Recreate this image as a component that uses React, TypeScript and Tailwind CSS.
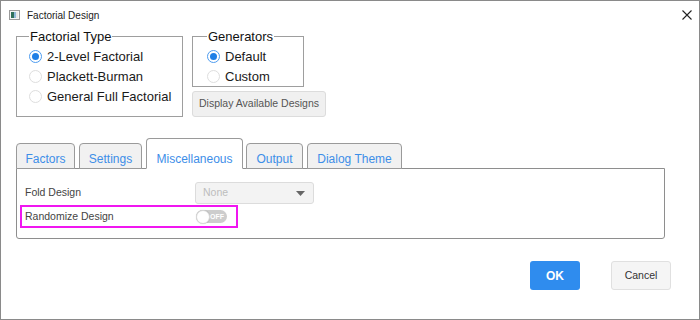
import { useState } from 'react';

const FONT = "font-['Liberation_Sans',Arial,sans-serif]";

function Radio({ checked, label }: { checked: boolean; label: string }) {
  return (
    <div className="flex h-[20px] items-center gap-[5px]">
      {checked ? (
        <span className="flex h-[13px] w-[13px] items-center justify-center rounded-full border-[1.5px] border-[#4d9cf0] bg-white">
          <span className="h-[7px] w-[7px] rounded-full bg-[#1f7fe6]" />
        </span>
      ) : (
        <span className="h-[13px] w-[13px] rounded-full border border-[#dedede] bg-white" />
      )}
      <span className="text-[13px] leading-none text-[#1a1a1a]">{label}</span>
    </div>
  );
}

const tabs = [
  { name: 'Factors', w: 'w-[59px]' },
  { name: 'Settings', w: 'w-[63px]' },
  { name: 'Miscellaneous', w: 'w-[97px]' },
  { name: 'Output', w: 'w-[57px]' },
  { name: 'Dialog Theme', w: 'w-[95px]' },
];

export default function App() {
  const [active] = useState('Miscellaneous');

  return (
    <div className={`flex h-[320px] w-[700px] flex-col border border-[#8a8a8a] bg-white ${FONT}`}>
      {/* Title bar */}
      <div className="flex h-[28px] items-center justify-between pl-[8px] pr-[7px]">
        <div className="flex items-center gap-[7px]">
          <svg width="11" height="10" viewBox="0 0 11 10">
            <rect x="0.5" y="0.5" width="10" height="9" fill="#f4f4f4" stroke="#9a9a9a" />
            <rect x="2" y="2" width="3" height="6" fill="#2f6f5a" />
            <rect x="5" y="2" width="2" height="6" fill="#8fb8d8" />
            <rect x="7" y="2" width="2" height="6" fill="#e6e6e6" />
          </svg>
          <span className="text-[10px] text-[#222]">Factorial Design</span>
        </div>
        <svg width="10" height="10" viewBox="0 0 10 10" className="mt-[-1px]">
          <path d="M0.5 0.5 L9.5 9.5 M9.5 0.5 L0.5 9.5" stroke="#222" strokeWidth="1.1" />
        </svg>
      </div>

      {/* Option groups */}
      <div className="flex items-start gap-[9px] pl-[15px]">
        <fieldset className="h-[88px] w-[167px] border border-[#9e9e9e] pb-[10px] pl-[12px]">
          <legend className="px-[1px] text-[13px] leading-[15px] text-[#111]">Factorial Type</legend>
          <div className="mt-[2px]">
            <Radio checked label="2-Level Factorial" />
            <Radio checked={false} label="Plackett-Burman" />
            <Radio checked={false} label="General Full Factorial" />
          </div>
        </fieldset>

        <div className="flex flex-col">
          <fieldset className="h-[58px] w-[112px] border border-[#9e9e9e] pl-[14px]">
            <legend className="px-[1px] text-[13px] leading-[15px] text-[#111]">Generators</legend>
            <div className="mt-[2px]">
              <Radio checked label="Default" />
              <Radio checked={false} label="Custom" />
            </div>
          </fieldset>
          <button className="mt-[4px] h-[26px] w-[134px] rounded-[3px] border border-[#dcdcdc] bg-[#f0f0f0] text-[10.5px] text-[#555]">
            Display Available Designs
          </button>
        </div>
      </div>

      {/* Tabs */}
      <div className="relative z-10 mb-[-1px] ml-[15px] mt-[21px] flex items-end">
        {tabs.map((t, i) => {
          const sel = t.name === active;
          const gap = i === 0 ? '' : i === 3 ? 'ml-[3px]' : 'ml-[4px]';
          return (
            <div
              key={t.name}
              className={`${t.w} ${gap} flex justify-center rounded-t-[4px] border border-[#9a9a9a] text-[12px] text-[#3d8ee8] ${
                sel
                  ? 'h-[31px] border-b-white bg-white pt-[11px]'
                  : 'h-[26px] bg-[#f1f1f1] pt-[6px]'
              }`}
            >
              {t.name}
            </div>
          );
        })}
      </div>

      {/* Tab panel */}
      <div className="ml-[15px] h-[71px] w-[649px] rounded-b-[3px] border border-[#8e8e8e] bg-white pt-[13px]">
        <div className="flex items-start">
          <span className="ml-[8px] mt-[3px] w-[170px] text-[10.5px] text-[#444]">Fold Design</span>
          <div className="flex h-[22px] w-[119px] items-center justify-between rounded-[3px] border border-[#dcdcdc] bg-[#f3f3f3] pl-[7px] pr-[8px]">
            <span className="text-[10.5px] text-[#bdbdbd]">None</span>
            <svg width="9" height="5" viewBox="0 0 9 5">
              <path d="M0 0 H9 L4.5 5 Z" fill="#666" />
            </svg>
          </div>
        </div>
        <div className="ml-[3px] mt-[1px] flex h-[23px] w-[218px] items-center border-2 border-[#f016f0] pl-[3px]">
          <span className="w-[171px] text-[10.5px] text-[#444]">Randomize Design</span>
          <div className="relative flex h-[13px] w-[31px] items-center justify-end rounded-full bg-[#cdcdcd] pr-[3px]">
            <span className="absolute left-0 top-[-0.5px] h-[14px] w-[14px] rounded-full border border-[#d8d8d8] bg-white shadow-[0_0_1px_rgba(0,0,0,0.2)]" />
            <span className="text-[7px] font-bold leading-none text-white">OFF</span>
          </div>
        </div>
      </div>

      {/* Footer buttons */}
      <div className="mt-[22px] flex justify-end gap-[31px] pr-[28px]">
        <button className="h-[29px] w-[50px] rounded-[3px] bg-[#2f8cee] text-[12px] font-bold text-white">
          OK
        </button>
        <button className="h-[29px] w-[60px] rounded-[3px] border border-[#e0e0e0] bg-[#f5f5f5] text-[10.5px] text-[#333]">
          Cancel
        </button>
      </div>
    </div>
  );
}
